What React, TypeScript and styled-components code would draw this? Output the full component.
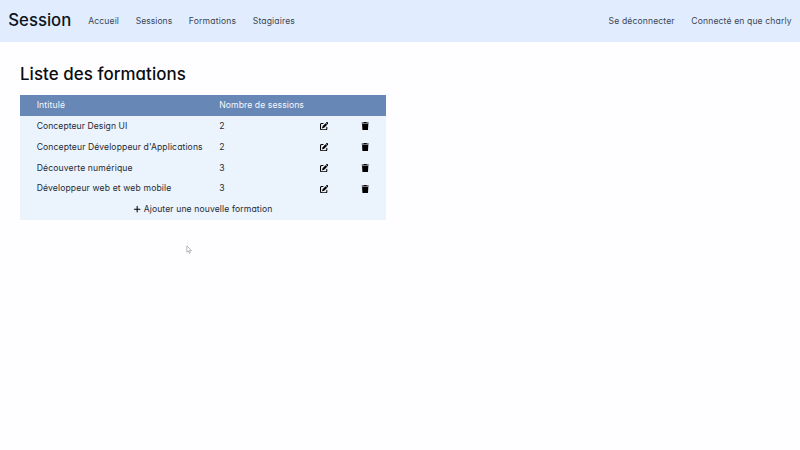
import React from "react";
import styled, { createGlobalStyle } from "styled-components";
import { FaPenToSquare, FaPlus, FaTrash } from "react-icons/fa6";

const GlobalStyle = createGlobalStyle`
  * { box-sizing: border-box; }
  body {
    margin: 0;
    background: #fefdff;
    color: #262b33;
    font-family: "Inter", "Noto Sans", sans-serif;
    font-feature-settings: "cv11";
    font-size: 8.6px;
    line-height: 12.5px;
  }
`;

const Page = styled.div`
  position: relative;
  height: 450px;
  overflow: hidden;
`;

const Header = styled.header`
  display: flex;
  align-items: center;
  height: 41.5px;
  padding: 0 8.33px;
  background: #e1edff;
`;

const Brand = styled.h1`
  margin: 0 16.9px 0 0;
  width: 63px;
  font-size: 16.7px;
  font-weight: 500;
  line-height: 25px;
  color: #0d141d;
  white-space: nowrap;
`;

const Nav = styled.nav`
  display: flex;
  gap: 16.6px;

  &:last-child { margin-left: auto; }
`;

const Link = styled.a<{ $track: number }>`
  letter-spacing: ${(p) => p.$track}px;
  color: #3c4654;
  white-space: nowrap;
`;

const Main = styled.main`
  padding: 20px 20px 0;
`;

const Title = styled.h2`
  margin: 0 0 8.5px;
  font-size: 16.9px;
  font-weight: 500;
  line-height: 25px;
  letter-spacing: 0.06px;
  color: #0b0c0e;
`;

const Table = styled.div`
  width: 365.7px;
  background: #ebf3fd;
`;

const Row = styled.div<{ $head?: boolean }>`
  display: grid;
  grid-template-columns: 182.6px 100.6px 41.6px 1fr;
  align-items: center;
  height: 20.83px;
  padding-left: 16.67px;
  background: ${(p) => (p.$head ? "#6787b7" : "transparent")};
  color: ${(p) => (p.$head ? "#f5f8fd" : "inherit")};
`;

const Cell = styled.span<{ $track?: number }>`
  letter-spacing: ${(p) => p.$track ?? 0}px;
  white-space: nowrap;
`;

const IconCell = styled.span`
  display: flex;
  color: #000;
  font-size: 8.4px;
`;

const AddRow = styled.div`
  display: flex;
  align-items: center;
  justify-content: center;
  gap: 2px;
  height: 20.83px;
  color: #262b33;

  svg {
    color: #000;
    font-size: 8.33px;
  }
`;

const Pointer = styled.svg`
  position: absolute;
  left: 186px;
  top: 245px;
  width: 6px;
  height: 9px;
`;

const links = [
  { label: "Accueil", track: 0.12 },
  { label: "Sessions", track: 0.02 },
  { label: "Formations", track: 0.16 },
  { label: "Stagiaires", track: 0.14 },
];

const account = [
  { label: "Se déconnecter", track: 0.13 },
  { label: "Connecté en que charly", track: 0.13 },
];

const formations = [
  { label: "Concepteur Design UI", track: 0.06, sessions: 2 },
  { label: "Concepteur Développeur d'Applications", track: 0.11, sessions: 2 },
  { label: "Découverte numérique", track: 0.15, sessions: 3 },
  { label: "Développeur web et web mobile", track: 0.14, sessions: 3 },
];

export default function App() {
  return (
    <Page>
      <GlobalStyle />
      <Header>
        <Brand>Session</Brand>
        <Nav>
          {links.map((l) => (
            <Link key={l.label} $track={l.track}>{l.label}</Link>
          ))}
        </Nav>
        <Nav>
          {account.map((l) => (
            <Link key={l.label} $track={l.track}>{l.label}</Link>
          ))}
        </Nav>
      </Header>
      <Main>
        <Title>Liste des formations</Title>
        <Table>
          <Row $head>
            <Cell $track={0.15}>Intitulé</Cell>
            <Cell $track={0.09}>Nombre de sessions</Cell>
          </Row>
          {formations.map((f) => (
            <Row key={f.label}>
              <Cell $track={f.track}>{f.label}</Cell>
              <Cell>{f.sessions}</Cell>
              <IconCell><FaPenToSquare /></IconCell>
              <IconCell><FaTrash /></IconCell>
            </Row>
          ))}
          <AddRow>
            <FaPlus />
            <Cell $track={0.12}>Ajouter une nouvelle formation</Cell>
          </AddRow>
        </Table>
      </Main>
      <Pointer viewBox="0 0 6 9">
        <path d="M.8.8v6.4l1.5-1.3 1 2.3 1.1-.5-1-2.2h2z" fill="#fff" stroke="#8b8b90" strokeWidth=".6" />
      </Pointer>
    </Page>
  );
}
